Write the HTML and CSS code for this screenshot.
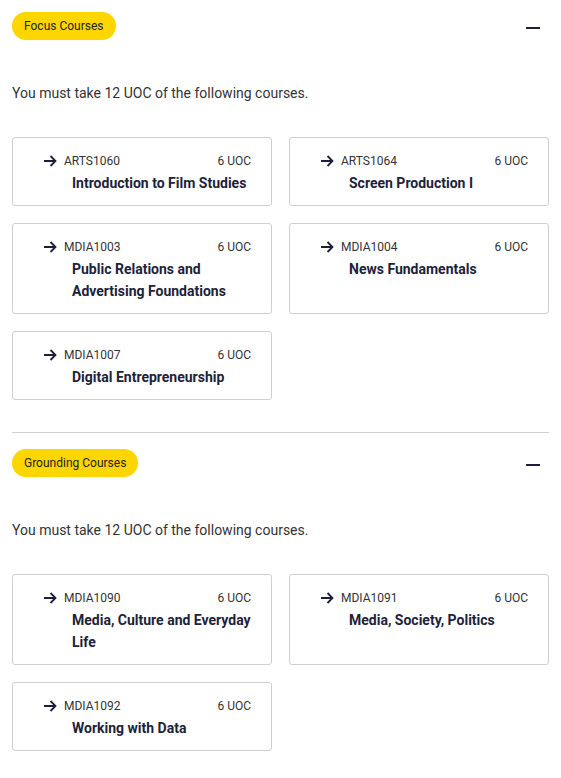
FILE: index.html
```html
<!DOCTYPE html>
<html>
<head>
<meta charset="utf-8">
<link rel="stylesheet" href="styles.css">
</head>
<body>
<div class="page">
  <section class="group">
    <div class="group-head">
      <span class="badge">Focus Courses</span>
      <span class="minus"></span>
    </div>
    <p class="desc">You must take 12 UOC of the following courses.</p>
    <div class="grid">
      <div class="card">
        <div class="card-top">
          <svg class="arrow" width="14" height="12" viewBox="0 0 14 12"><path d="M1 6H12.5M7.5 1L12.5 6L7.5 11" fill="none" stroke="#1b1f3b" stroke-width="1.8"/></svg>
          <span class="code">ARTS1060</span>
          <span class="uoc">6 UOC</span>
        </div>
        <div class="title">Introduction to Film Studies</div>
      </div>
      <div class="card">
        <div class="card-top">
          <svg class="arrow" width="14" height="12" viewBox="0 0 14 12"><path d="M1 6H12.5M7.5 1L12.5 6L7.5 11" fill="none" stroke="#1b1f3b" stroke-width="1.8"/></svg>
          <span class="code">ARTS1064</span>
          <span class="uoc">6 UOC</span>
        </div>
        <div class="title">Screen Production I</div>
      </div>
      <div class="card">
        <div class="card-top">
          <svg class="arrow" width="14" height="12" viewBox="0 0 14 12"><path d="M1 6H12.5M7.5 1L12.5 6L7.5 11" fill="none" stroke="#1b1f3b" stroke-width="1.8"/></svg>
          <span class="code">MDIA1003</span>
          <span class="uoc">6 UOC</span>
        </div>
        <div class="title">Public Relations and Advertising Foundations</div>
      </div>
      <div class="card">
        <div class="card-top">
          <svg class="arrow" width="14" height="12" viewBox="0 0 14 12"><path d="M1 6H12.5M7.5 1L12.5 6L7.5 11" fill="none" stroke="#1b1f3b" stroke-width="1.8"/></svg>
          <span class="code">MDIA1004</span>
          <span class="uoc">6 UOC</span>
        </div>
        <div class="title">News Fundamentals</div>
      </div>
      <div class="card">
        <div class="card-top">
          <svg class="arrow" width="14" height="12" viewBox="0 0 14 12"><path d="M1 6H12.5M7.5 1L12.5 6L7.5 11" fill="none" stroke="#1b1f3b" stroke-width="1.8"/></svg>
          <span class="code">MDIA1007</span>
          <span class="uoc">6 UOC</span>
        </div>
        <div class="title">Digital Entrepreneurship</div>
      </div>
    </div>
  </section>
  <hr class="divider">
  <section class="group">
    <div class="group-head">
      <span class="badge">Grounding Courses</span>
      <span class="minus"></span>
    </div>
    <p class="desc">You must take 12 UOC of the following courses.</p>
    <div class="grid">
      <div class="card">
        <div class="card-top">
          <svg class="arrow" width="14" height="12" viewBox="0 0 14 12"><path d="M1 6H12.5M7.5 1L12.5 6L7.5 11" fill="none" stroke="#1b1f3b" stroke-width="1.8"/></svg>
          <span class="code">MDIA1090</span>
          <span class="uoc">6 UOC</span>
        </div>
        <div class="title">Media, Culture and Everyday Life</div>
      </div>
      <div class="card">
        <div class="card-top">
          <svg class="arrow" width="14" height="12" viewBox="0 0 14 12"><path d="M1 6H12.5M7.5 1L12.5 6L7.5 11" fill="none" stroke="#1b1f3b" stroke-width="1.8"/></svg>
          <span class="code">MDIA1091</span>
          <span class="uoc">6 UOC</span>
        </div>
        <div class="title">Media, Society, Politics</div>
      </div>
      <div class="card">
        <div class="card-top">
          <svg class="arrow" width="14" height="12" viewBox="0 0 14 12"><path d="M1 6H12.5M7.5 1L12.5 6L7.5 11" fill="none" stroke="#1b1f3b" stroke-width="1.8"/></svg>
          <span class="code">MDIA1092</span>
          <span class="uoc">6 UOC</span>
        </div>
        <div class="title">Working with Data</div>
      </div>
    </div>
  </section>
</div>
</body>
</html>
```

FILE: styles.css
```css
* { box-sizing: border-box; }
html, body { margin: 0; padding: 0; background: #fff; }
body {
  font-family: Roboto, "Liberation Sans", sans-serif;
  color: #333;
}
.page {
  padding: 12px 12px 0 12px;
}
.group-head {
  display: flex;
  align-items: center;
  justify-content: space-between;
  height: 28px;
}
.badge {
  display: inline-flex;
  align-items: center;
  height: 28px;
  padding: 0 12px;
  background: #fdd600;
  border-radius: 14px;
  font-size: 12px;
  color: #222;
}
.minus {
  display: block;
  width: 14px;
  height: 2px;
  background: #1b1f3b;
  margin-right: 9px;
  margin-top: 4px;
}
.desc {
  margin: 43px 0 0 0;
  font-size: 14px;
  line-height: 20px;
  color: #333;
}
.grid {
  margin-top: 34px;
  display: grid;
  grid-template-columns: 1fr 1fr;
  gap: 17px;
  align-items: stretch;
}
.card {
  border: 1px solid #cfcfcf;
  border-radius: 3px;
  padding: 15px 20px 11px 30px;
}
.card-top {
  display: flex;
  align-items: center;
  height: 16px;
}
.arrow {
  display: block;
  flex: none;
  margin-right: 7px;
}
.code {
  font-size: 12px;
  color: #333;
  flex: 1;
}
.uoc {
  font-size: 12px;
  color: #333;
}
.title {
  margin-top: 3px;
  padding-left: 29px;
  font-size: 14px;
  line-height: 22px;
  font-weight: 700;
  color: #1d2339;
}
.divider {
  border: 0;
  border-top: 1px solid #d0d0d0;
  margin: 32px 0 16px 0;
  height: 0;
}
```
